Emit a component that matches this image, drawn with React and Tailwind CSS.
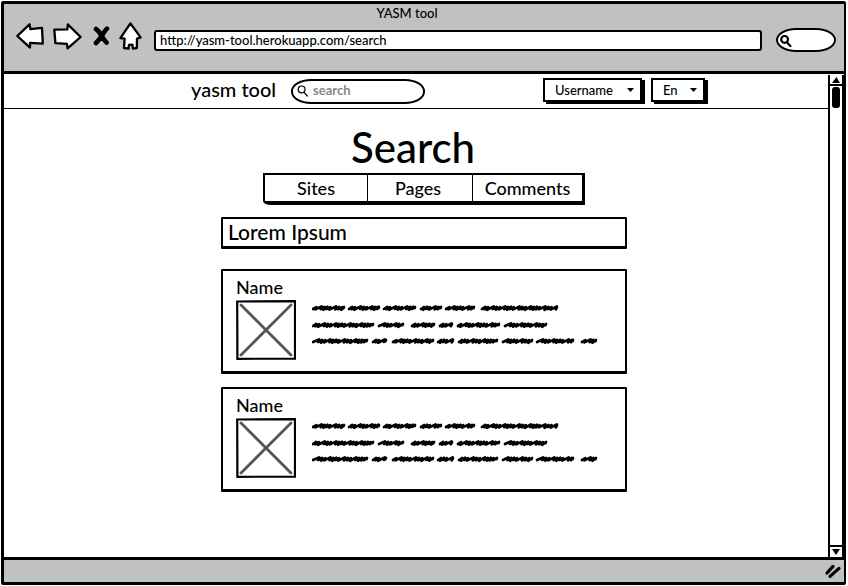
const SCRIBBLES = [
  { y: 8, words: [[1, 32], [37, 67], [72, 103], [109, 129], [134, 162], [170, 245]] },
  { y: 25, words: [[1, 61], [67, 91], [100, 122], [128, 140], [146, 187], [193, 234]] },
  { y: 41, words: [[1, 55], [61, 74], [81, 121], [126, 141], [147, 185], [191, 220], [225, 261], [270, 284]] },
];

function scribble(x1, x2, y) {
  let d = `M${x1} ${y + 1}`;
  let x = x1;
  let i = (x1 * 3 + y) % 7;
  while (x < x2 - 4) {
    const step = [3.2, 3, 6, 3.2, 3.4, 5.4, 3][i % 7];
    const up = [1.2, 0.8, 1.6, 1, 0.8, 1.6, 1][i % 7];
    const down = [1.2, 1.8, 1, 1.6, 1.4][i % 5];
    d += ` L${(x + step).toFixed(1)} ${y - up} L${(x + step - 0.9).toFixed(1)} ${y + down}`;
    x += step - 0.2;
    i += 1;
  }
  return `${d} L${x2} ${y - 1} L${x2 - 0.4} ${y}`;
}

function ScribbleText() {
  return (
    <svg className="h-[50px] w-[286px] shrink-0" viewBox="0 0 286 50" fill="none" stroke="#000" strokeWidth="2.7" strokeLinecap="round" strokeLinejoin="round" aria-hidden="true">
      {SCRIBBLES.map((line) => line.words.map(([a, b]) => <path key={`${line.y}-${a}`} d={scribble(a, b, line.y)} />))}
    </svg>
  );
}

function Placeholder() {
  return (
    <svg className="size-[60px] shrink-0" viewBox="0 0 60 60" fill="none" aria-hidden="true">
      <path d="M5 5L55 55M55 5L5 55" stroke="#555" strokeWidth="2.8" strokeLinecap="round" />
      <path d="M1.2 1.5L59 1.2L59 58.6L1.4 58.8Z" stroke="#000" strokeWidth="2.2" />
    </svg>
  );
}

function Magnifier({ className, width }) {
  return (
    <svg className={className} viewBox="0 0 12 12" fill="none" stroke="#000" strokeWidth={width} strokeLinecap="round" aria-hidden="true">
      <circle cx="4.6" cy="4.4" r="3.4" />
      <path d="M6.8 7.2L10.4 11" />
    </svg>
  );
}

function NavIcon({ label, className, viewBox, children }) {
  return (
    <button type="button" aria-label={label} className="shrink-0">
      <svg className={className} viewBox={viewBox} fill="#fff" stroke="#000" strokeWidth="2.3" strokeLinejoin="round" strokeLinecap="round">
        {children}
      </svg>
    </button>
  );
}

function Dropdown({ label, className, children }) {
  return (
    <div className={`relative ${className}`}>
      <select aria-label={label} className="h-6 w-full appearance-none border-2 border-black bg-white pl-2.5 text-[13px] leading-5 shadow-[3px_2px_0_#000] outline-none">
        {children}
      </select>
      <svg className="pointer-events-none absolute top-[11px] right-2 h-1 w-[7px]" viewBox="0 0 7 4" aria-hidden="true">
        <path d="M0 0H7L3.5 4Z" />
      </svg>
    </div>
  );
}

function ResultCard() {
  return (
    <article className="h-[105px] rounded-[1px] border-2 border-b-3 border-black bg-white pt-1.5 pl-[13px]">
      <h2 className="h-[23px] text-[18px] leading-5 font-medium">Name</h2>
      <div className="flex gap-4">
        <Placeholder />
        <ScribbleText />
      </div>
    </article>
  );
}

export default function App() {
  return (
    <div className="flex h-screen p-px pr-0.5 font-[Lato,'Liberation_Sans',sans-serif] font-medium text-black">
      <div className="flex min-w-0 flex-1 flex-col rounded-[2px] border-[3px] border-r-2 border-black bg-white">
        <header className="h-[70px] shrink-0 border-b-[3px] border-black bg-[#c1c1c1]">
          <p className="h-[18px] pr-[34px] text-center text-[13px] leading-[18px]">YASM tool</p>
          <div className="flex h-7 items-center pr-2 pl-3">
            <NavIcon label="Back" className="h-[26px] w-7" viewBox="0 0 28 26">
              <path d="M1.3 13L13.5 1.3L14.4 6.2L26 4.8L26.8 20.6L14 19.8V24.6Z" />
            </NavIcon>
            <span className="w-[9px]" />
            <NavIcon label="Forward" className="h-[27px] w-[29px]" viewBox="0 0 29 27">
              <path d="M1.3 6.6L14.4 6.4L14.8 1.4L27.6 14L14.6 25.4L14 20.8L2.4 20.2Z" />
            </NavIcon>
            <span className="w-[11px]" />
            <NavIcon label="Stop" className="h-5 w-[17px]" viewBox="0 0 17 20">
              <path d="M3 3Q6 5 8 9Q11 14 13.6 16.6M14 2.6Q11 6 8.6 10Q6 14 3 17" strokeWidth="4.6" fill="none" />
            </NavIcon>
            <span className="w-[9px]" />
            <NavIcon label="Home" className="h-7 w-[23px]" viewBox="0 0 23 28">
              <path d="M11.4 1.4L21.6 15.4L18 16.6L17.8 26L14 26.6L13.4 22.6L10 22.8L9.6 26.6L5 26L5.6 16.6L1.4 16.2Z" />
            </NavIcon>
            <input aria-label="Address" defaultValue="http://yasm-tool.herokuapp.com/search" className="mt-2 ml-3 h-[21px] min-w-0 flex-1 rounded-[3px] border-2 border-black bg-white px-1 pb-px text-[13px] leading-4 outline-none" />
            <label className="mt-2 ml-3.5 flex h-6 w-[60px] items-center rounded-[20px/12px] border-2 border-black bg-white pt-0.5 pl-0.5">
              <Magnifier className="size-3 shrink-0" width="2.2" />
              <input aria-label="Browser search" className="w-8 bg-transparent outline-none" />
            </label>
          </div>
        </header>

        <div className="flex min-h-0 flex-1">
          <main className="min-w-0 flex-1">
            <nav className="flex h-[35px] items-center justify-center border-b border-black pl-16">
              <a href="#home" className="w-[100px] pb-1 text-[20px] leading-6">yasm tool</a>
              <label className="flex h-[25px] w-[134px] items-center rounded-[20px/12px] border-2 border-black pl-1">
                <Magnifier className="size-3 shrink-0" width="1.2" />
                <input aria-label="Search the site" placeholder="search" className="ml-1 w-24 bg-transparent pb-0.5 text-[13px] leading-4 font-bold outline-none placeholder:text-[#888]" />
              </label>
              <div className="flex gap-[9px] pb-1 pl-[118px]">
                <Dropdown label="User" className="w-[99px]"><option>Username</option></Dropdown>
                <Dropdown label="Language" className="w-[54px]"><option>En</option></Dropdown>
              </div>
            </nav>

            <section className="flex flex-col items-center pl-4">
              <h1 className="mt-3 pr-[22px] text-[42px] leading-[52px]">Search</h1>
              <div role="tablist" className="grid h-8 w-[322px] grid-cols-[102px_106px_1fr] rounded-bl-[8px_4px] border-2 border-r-3 border-b-4 border-black text-[18px] leading-[26px]">
                <button type="button" role="tab" aria-selected="true">Sites</button>
                <button type="button" role="tab" className="border-x border-black pr-1">Pages</button>
                <button type="button" role="tab">Comments</button>
              </div>
              <div className="mt-3 flex w-[406px] flex-col">
                <input aria-label="Search query" defaultValue="Lorem Ipsum" className="h-8 rounded-[1px] border-2 border-b-3 border-black px-[5px] pb-0.5 text-[21px] leading-6 outline-none" />
                <div className="mt-5 flex flex-col gap-[13px]">
                  <ResultCard />
                  <ResultCard />
                </div>
              </div>
            </section>
          </main>

          <div className="mt-px flex w-4 shrink-0 flex-col items-center border-x-2 border-black">
            <button type="button" aria-label="Scroll up" className="flex h-[11px] w-full items-center justify-center border-b-2 border-black">
              <svg className="h-[6px] w-2" viewBox="0 0 8 6"><path d="M4.5 0L8 6H0Z" /></svg>
            </button>
            <span className="mt-px h-[21px] w-2 rounded-[3px] bg-black" />
            <span className="flex-1" />
            <button type="button" aria-label="Scroll down" className="flex h-3 w-full items-center justify-center border-t-2 border-black">
              <svg className="h-[6px] w-2" viewBox="0 0 8 6"><path d="M0 0H8L4 6Z" /></svg>
            </button>
          </div>
        </div>

        <footer className="flex h-[25px] shrink-0 items-center justify-end border-t-[3px] border-black bg-[#c1c1c1] pr-0.5">
          <svg className="h-4 w-[18px]" viewBox="0 0 18 16" fill="none" stroke="#000" strokeWidth="3.2" strokeLinecap="round" aria-hidden="true">
            <path d="M3 10L9 3.4M6 13.4L15 5.4" />
          </svg>
        </footer>
      </div>
    </div>
  );
}
